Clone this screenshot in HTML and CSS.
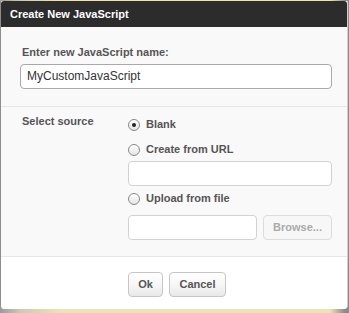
FILE: index.html
```html
<!DOCTYPE html>
<html>
<head>
<meta charset="utf-8">
<link rel="stylesheet" href="styles.css">
</head>
<body>
<div class="dialog">
  <div class="titlebar">Create New JavaScript</div>
  <div class="section name-section">
    <label class="field-label">Enter new JavaScript name:</label>
    <div class="textbox wide">MyCustomJavaScript</div>
  </div>
  <div class="section source-section">
    <div class="field-label">Select source</div>
    <div class="options">
      <div class="option opt-blank"><span class="radio checked"></span><span class="opt-text">Blank</span></div>
      <div class="option opt-url"><span class="radio"></span><span class="opt-text">Create from URL</span></div>
      <div class="textbox url"></div>
      <div class="option opt-file"><span class="radio"></span><span class="opt-text">Upload from file</span></div>
      <div class="file-row">
        <div class="textbox file"></div>
        <div class="btn disabled">Browse...</div>
      </div>
    </div>
  </div>
  <div class="footer">
    <div class="btn">Ok</div>
    <div class="btn">Cancel</div>
  </div>
</div>
</body>
</html>
```
FILE: styles.css
```css
html, body {
  margin: 0;
  padding: 0;
}
body {
  width: 349px;
  height: 313px;
  background: linear-gradient(to right, #9a9a9a 0, #cfc9b0 20px, #efe3ae 60px, #efe3ae 330px, #8a8a8a 345px);
  font-family: "Liberation Sans", Arial, sans-serif;
  overflow: hidden;
}
.dialog {
  margin-top: 1px;
  width: 348px;
  height: 308px;
  background: #f9f9f9;
  border-left: 1px solid #8d8d8d;
  border-right: 1px solid #d0d0d0;
  border-bottom-right-radius: 4px;
  border-bottom-left-radius: 4px;
  display: flex;
  flex-direction: column;
  box-sizing: border-box;
}
.titlebar {
  height: 26px;
  background: #2c2c2c;
  color: #fff;
  font-weight: bold;
  font-size: 11px;
  line-height: 27px;
  padding-left: 9px;
  border-top-left-radius: 3px;
  border-top-right-radius: 3px;
  flex: none;
}
.section {
  border-bottom: 1px solid #e6e6e6;
  flex: none;
}
.name-section {
  padding: 19px 0 17px 19px;
}
.field-label {
  display: block;
  color: #555;
  font-weight: bold;
  font-size: 11px;
  line-height: 13px;
  padding-left: 2px;
}
.name-section .field-label {
  margin-bottom: 5px;
}
.textbox {
  box-sizing: border-box;
  height: 25px;
  background: #fff;
  border: 1px solid #d2d2d2;
  border-radius: 4px;
  font-size: 12px;
  line-height: 23px;
  color: #333;
  padding-left: 6px;
}
.textbox.wide {
  width: 312px;
  border-color: #a9a9a9;
}
.source-section {
  display: flex;
  padding: 8px 0 16px 19px;
}
.source-section .field-label {
  width: 106px;
}
.options {
  display: flex;
  flex-direction: column;
}
.option {
  display: flex;
  align-items: center;
  height: 13px;
}
.opt-blank { margin-top: 3px; }
.opt-url { margin-top: 12px; }
.textbox.url { margin-top: 5px; width: 204px; }
.opt-file { margin-top: 6px; }
.file-row {
  display: flex;
  gap: 6px;
  margin-top: 10px;
}
.radio {
  box-sizing: border-box;
  width: 12px;
  height: 12px;
  border: 1px solid #8a8a8a;
  border-radius: 50%;
  background: linear-gradient(#ffffff, #e4e4e4);
  display: flex;
  align-items: center;
  justify-content: center;
  margin-right: 6px;
  flex: none;
}
.radio.checked::after {
  content: "";
  width: 4px;
  height: 4px;
  border-radius: 50%;
  background: #222;
}
.opt-text {
  color: #555;
  font-weight: bold;
  font-size: 11px;
  line-height: 13px;
}
.textbox.file {
  width: 129px;
}
.btn {
  box-sizing: border-box;
  height: 25px;
  border: 1px solid #c6c6c6;
  border-radius: 4px;
  background: linear-gradient(#ffffff, #f6f6f6 55%, #e8e8e8);
  font-weight: bold;
  font-size: 11px;
  color: #555;
  line-height: 23px;
  text-align: center;
  padding: 0 7px;
}
.btn.disabled {
  color: #aaa;
  width: 69px;
  border-color: #dcdcdc;
  background: #f7f7f7;
}
.footer {
  flex: 1;
  background: #fff;
  display: flex;
  justify-content: center;
  align-items: flex-start;
  gap: 6px;
  padding-top: 15px;
  padding-left: 6px;
  border-bottom-left-radius: 4px;
  border-bottom-right-radius: 4px;
}
.footer .btn:first-child {
  width: 35px;
}
.footer .btn:last-child {
  width: 57px;
}
```
